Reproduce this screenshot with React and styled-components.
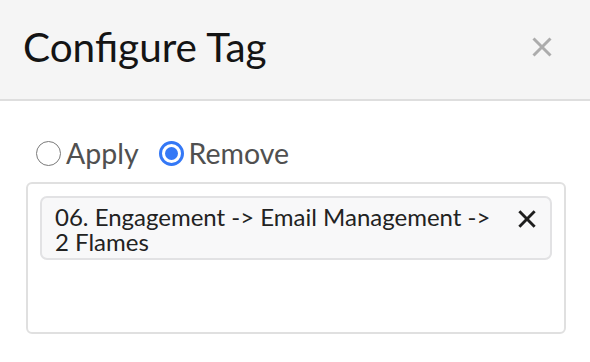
import React, { useState } from "react";
import styled, { createGlobalStyle } from "styled-components";

const Global = createGlobalStyle`
  html, body { margin: 0; padding: 0; background: #ffffff; }
  body { font-family: "Lato", "Open Sans", sans-serif; }
`;

const Modal = styled.div`
  width: 590px;
  height: 362px;
  background: #ffffff;
  overflow: hidden;
`;

const Header = styled.div`
  height: 101px;
  box-sizing: border-box;
  background: #f5f5f5;
  border-bottom: 2px solid #dedede;
  display: flex;
  align-items: center;
  justify-content: space-between;
  padding: 0 38px 6px 23px;
`;

const Title = styled.h2`
  margin: 0;
  font-size: 40.5px;
  line-height: 48px;
  font-weight: 400;
  color: #141414;
`;

const IconButton = styled.button`
  border: 0;
  background: transparent;
  padding: 0;
  margin-top: ${(p) => p.$offset || 0}px;
  display: flex;
  flex-shrink: 0;
  cursor: pointer;
`;

const Body = styled.div`
  padding: 35px 24px 0 26px;
`;

const RadioGroup = styled.div`
  display: flex;
  align-items: center;
  gap: 20px;
  padding-left: 10px;
  height: 34px;
`;

const RadioLabel = styled.label`
  display: flex;
  align-items: center;
  gap: 5px;
  font-size: 28.5px;
  line-height: 34px;
  color: #505050;
  cursor: pointer;
`;

const RadioCircle = styled.span`
  width: 25px;
  height: 25px;
  box-sizing: border-box;
  border-radius: 50%;
  border: ${(p) => (p.$checked ? "3px solid #3478f6" : "1.5px solid #7a7a7a")};
  display: flex;
  align-items: center;
  justify-content: center;
  background: #ffffff;
  &::after {
    content: "";
    width: 13px;
    height: 13px;
    border-radius: 50%;
    background: #3478f6;
    display: ${(p) => (p.$checked ? "block" : "none")};
  }
`;

const TagBox = styled.div`
  margin-top: 12px;
  height: 152px;
  box-sizing: border-box;
  border: 2px solid #e0e0e0;
  border-radius: 6px;
  padding: 12px;
`;

const Chip = styled.div`
  display: flex;
  justify-content: space-between;
  align-items: flex-start;
  gap: 12px;
  background: #f8f8f9;
  border: 2px solid #e2e2e4;
  border-radius: 7px;
  padding: 6px 14px 4px 13px;
`;

const ChipText = styled.span`
  max-width: 440px;
  font-size: 24px;
  line-height: 25px;
  color: #222222;
`;

function XIcon({ size, stroke, width, inset }) {
  const a = inset;
  const b = 20 - inset;
  return (
    <svg width={size} height={size} viewBox="0 0 20 20" fill="none">
      <path d={`M${a} ${a} L${b} ${b} M${b} ${a} L${a} ${b}`} stroke={stroke} strokeWidth={width} strokeLinecap="butt" />
    </svg>
  );
}

export default function App() {
  const [mode, setMode] = useState("remove");
  return (
    <Modal>
      <Global />
      <Header>
        <Title>Configure Tag</Title>
        <IconButton aria-label="Close">
          <XIcon size={20} stroke="#acacac" width={3} inset={1.5} />
        </IconButton>
      </Header>
      <Body>
        <RadioGroup>
          <RadioLabel onClick={() => setMode("apply")}>
            <RadioCircle $checked={mode === "apply"} />
            Apply
          </RadioLabel>
          <RadioLabel onClick={() => setMode("remove")}>
            <RadioCircle $checked={mode === "remove"} />
            Remove
          </RadioLabel>
        </RadioGroup>
        <TagBox>
          <Chip>
            <ChipText>06. Engagement -&gt; Email Management -&gt; 2 Flames</ChipText>
            <IconButton $offset={6} aria-label="Remove tag">
              <XIcon size={18} stroke="#1e1e1e" width={3.2} inset={1.5} />
            </IconButton>
          </Chip>
        </TagBox>
      </Body>
    </Modal>
  );
}
